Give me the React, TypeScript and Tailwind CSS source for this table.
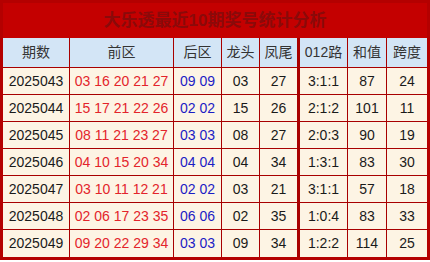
const rows = [
  { issue: "2025043", front: "03 16 20 21 27", back: "09 09", head: "03", tail: "27", road: "3:1:1", sum: "87", span: "24" },
  { issue: "2025044", front: "15 17 21 22 26", back: "02 02", head: "15", tail: "26", road: "2:1:2", sum: "101", span: "11" },
  { issue: "2025045", front: "08 11 21 23 27", back: "03 03", head: "08", tail: "27", road: "2:0:3", sum: "90", span: "19" },
  { issue: "2025046", front: "04 10 15 20 34", back: "04 04", head: "04", tail: "34", road: "1:3:1", sum: "83", span: "30" },
  { issue: "2025047", front: "03 10 11 12 21", back: "02 02", head: "03", tail: "21", road: "3:1:1", sum: "57", span: "18" },
  { issue: "2025048", front: "02 06 17 23 35", back: "06 06", head: "02", tail: "35", road: "1:0:4", sum: "83", span: "33" },
  { issue: "2025049", front: "09 20 22 29 34", back: "03 03", head: "09", tail: "34", road: "1:2:2", sum: "114", span: "25" },
];

// column widths include the right-hand rule
const cols = [
  "w-[67px] border-r",
  "w-[104px] border-r",
  "w-[48px] border-r",
  "w-[38px] border-r",
  "w-[40px] border-r-[3px]",
  "w-[48px] border-r",
  "w-[39px] border-r",
  "w-[40px]",
];

const headers = ["期数", "前区", "后区", "龙头", "凤尾", "012路", "和值", "跨度"];

export default function App() {
  return (
    <div
      className="w-[430px] h-[262px] bg-white"
      style={{ fontFamily: '"Liberation Sans", "Noto Sans CJK SC", sans-serif' }}
    >
      <div className="border-[3px] border-[#b40000] w-[430px]">
        <div className="h-[35px] bg-[#c40000] flex items-center justify-center text-[17px] font-bold text-[#8a0a0a]">
          大乐透最近10期奖号统计分析
        </div>
        <div className="flex h-[30px] bg-[#d3e5f6] border-b border-[#a80000] text-[14px] text-[#333]">
          {headers.map((h, i) => (
            <div key={h} className={`${cols[i]} border-[#a80000] flex items-center justify-center`}>
              {h}
            </div>
          ))}
        </div>
        {rows.map((r, idx) => {
          const cells = [r.issue, r.front, r.back, r.head, r.tail, r.road, r.sum, r.span];
          return (
            <div
              key={r.issue}
              className={`flex h-[27px] bg-[#fdf4e4] text-[14px] text-[#1a1a1a] ${
                idx < rows.length - 1 ? "border-b border-[#a80000]" : ""
              }`}
            >
              {cells.map((c, i) => (
                <div
                  key={i}
                  className={`${cols[i]} border-[#a80000] flex items-center justify-center ${
                    i === 1 ? "text-[#e3242b]" : i === 2 ? "text-[#1c1cc4]" : ""
                  }`}
                >
                  {c}
                </div>
              ))}
            </div>
          );
        })}
      </div>
    </div>
  );
}
